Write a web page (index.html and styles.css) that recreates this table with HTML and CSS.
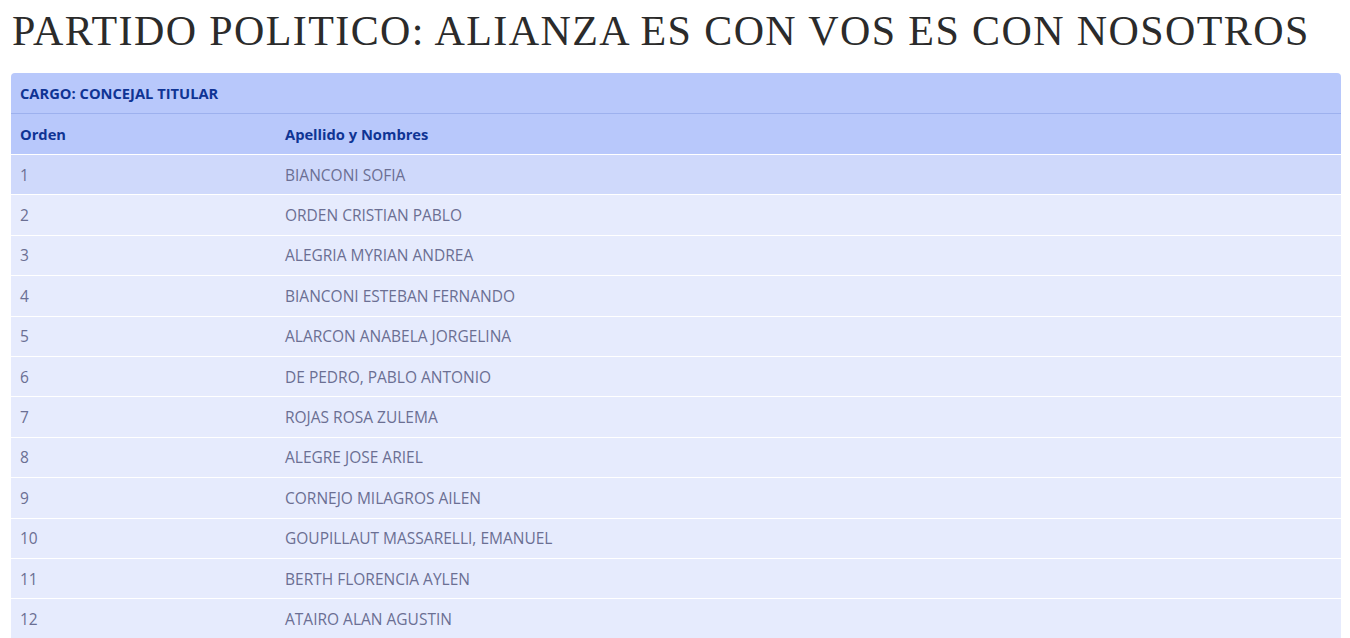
FILE: index.html
```html
<!DOCTYPE html>
<html lang="es">
<head>
<meta charset="utf-8">
<title>Partido Politico</title>
<link rel="stylesheet" href="styles.css">
</head>
<body>
<h1 class="title">Partido Politico: Alianza es con vos es con nosotros</h1>
<table class="list">
  <thead>
    <tr class="cargo"><th colspan="2">CARGO: CONCEJAL TITULAR</th></tr>
    <tr class="cols"><th class="c1">Orden</th><th>Apellido y Nombres</th></tr>
  </thead>
  <tbody>
    <tr class="active"><td>1</td><td>BIANCONI SOFIA</td></tr>
    <tr><td>2</td><td>ORDEN CRISTIAN PABLO</td></tr>
    <tr><td>3</td><td>ALEGRIA MYRIAN ANDREA</td></tr>
    <tr><td>4</td><td>BIANCONI ESTEBAN FERNANDO</td></tr>
    <tr><td>5</td><td>ALARCON ANABELA JORGELINA</td></tr>
    <tr><td>6</td><td>DE PEDRO, PABLO ANTONIO</td></tr>
    <tr><td>7</td><td>ROJAS ROSA ZULEMA</td></tr>
    <tr><td>8</td><td>ALEGRE JOSE ARIEL</td></tr>
    <tr><td>9</td><td>CORNEJO MILAGROS AILEN</td></tr>
    <tr><td>10</td><td>GOUPILLAUT MASSARELLI, EMANUEL</td></tr>
    <tr><td>11</td><td>BERTH FLORENCIA AYLEN</td></tr>
    <tr><td>12</td><td>ATAIRO ALAN AGUSTIN</td></tr>
  </tbody>
</table>
</body>
</html>
```
FILE: styles.css
```css
* { box-sizing: border-box; }
html, body { margin: 0; padding: 0; background: #ffffff; }
body { padding: 0 9px 0 11px; font-family: "Open Sans", "Noto Sans", sans-serif; }
.title {
  margin: 0;
  padding: 7px 0 0 1px;
  height: 73px;
  font-family: "Liberation Serif", serif;
  font-weight: normal;
  font-size: 42px;
  line-height: 48px;
  text-transform: uppercase;
  letter-spacing: 1.4px;
  color: #2b2b2b;
  white-space: nowrap;
}
.list {
  width: 100%;
  border-collapse: separate;
  border-spacing: 0;
}
.list th, .list td {
  text-align: left;
  padding: 0 9px;
  vertical-align: middle;
  border-bottom: 1px solid #ffffff;
}
.list th {
  background: #b8c8fb;
  color: #0f3494;
  font-weight: 700;
  font-size: 14.7px;
  height: 41px;
}
.cargo th { border-bottom: 1px solid #9db1ee; border-radius: 4px 4px 0 0; }
.list .c1 { width: 265px; }
.list td {
  background: #e6ebfd;
  color: #6b6f93;
  font-size: 15.5px;
  height: 40.4px;
}
.list tr.active td { background: #cfd9fb; }
```
